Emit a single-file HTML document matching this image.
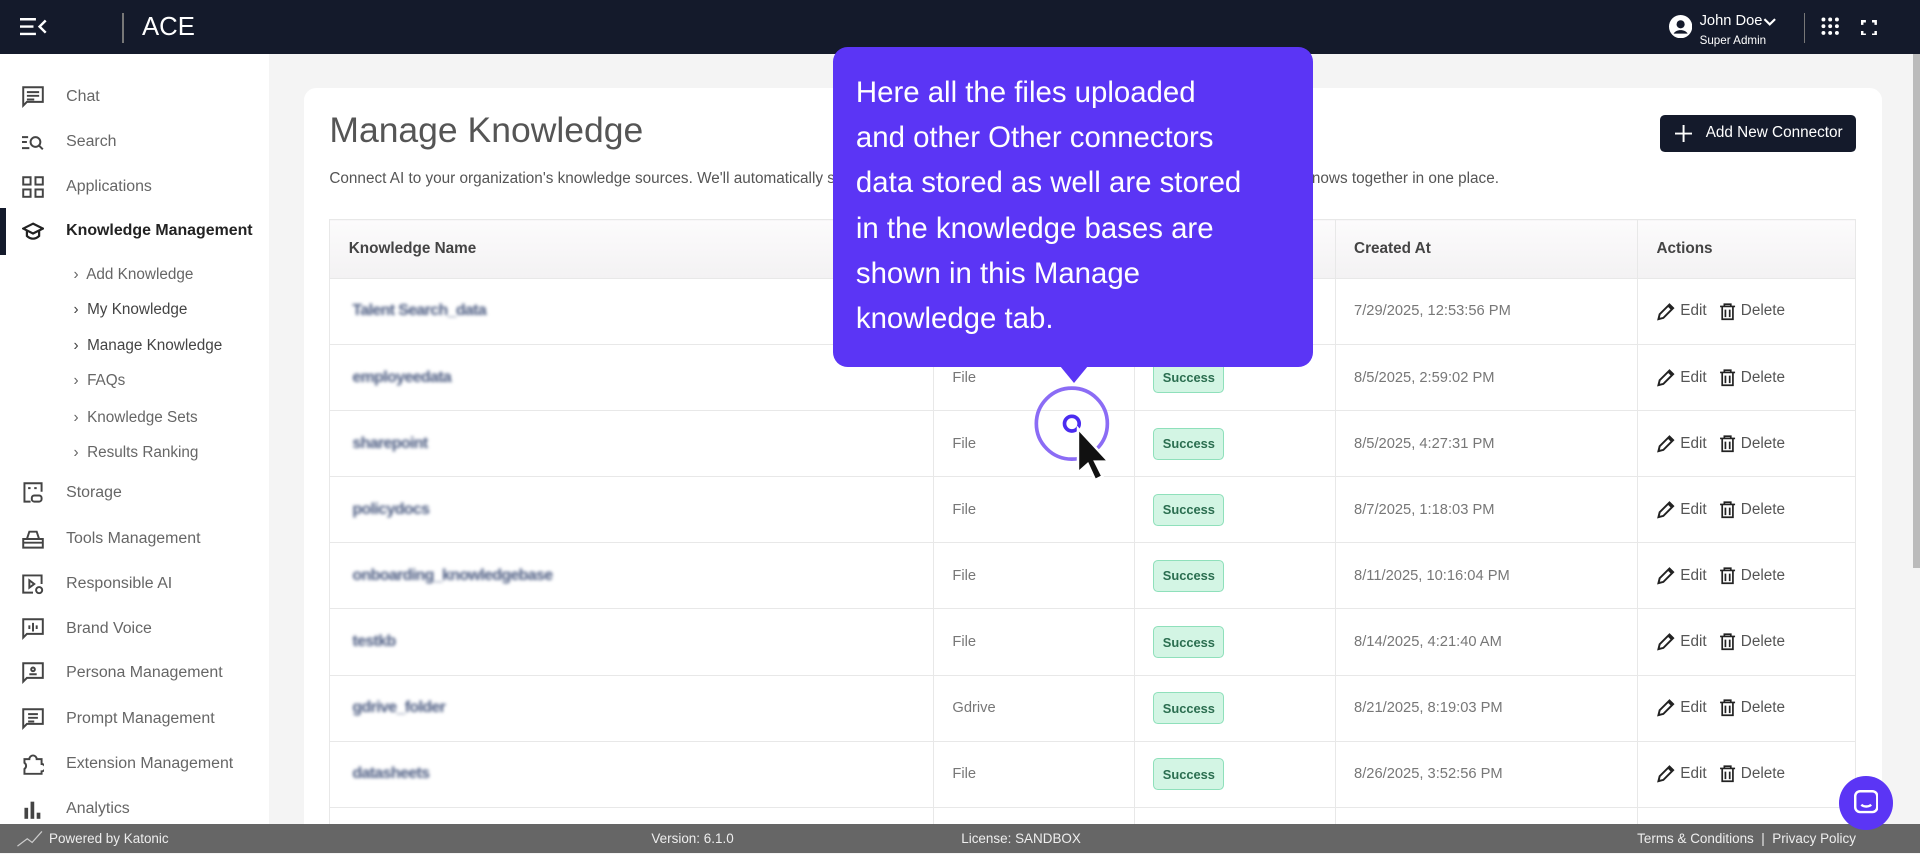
<!DOCTYPE html>
<html><head><meta charset="utf-8"><style>
*{box-sizing:border-box;margin:0;padding:0}
html,body{width:1920px;height:854px;overflow:hidden}
body{font-family:"Liberation Sans",sans-serif;background:#f5f5f5}
#r{zoom:1.2244898;width:1568px;height:697px;position:relative;overflow:hidden;background:#f4f4f4}
.a{position:absolute}
.hdr{left:0;top:0;width:1568px;height:44px;background:#141a2b;color:#fff}
.side{left:0;top:44px;width:220px;height:629px;background:#fff}
.ni{position:absolute;left:0;width:220px;height:30px;font-size:13px;color:#666;display:flex;align-items:center}
.ni svg{position:absolute;left:18px}
.ni span{position:absolute;left:54px}
.sub{position:absolute;left:60px;font-size:12.5px;color:#666}
.card{left:248px;top:72px;width:1289px;height:640px;background:#fff;border-radius:10px}
table{border-collapse:collapse;position:absolute;left:269px;top:179px;width:1247px;font-size:12px;color:#777}
td,th{border:1px solid #e8e8e8;height:54px;padding-left:15px;text-align:left}
th{height:48px;background:linear-gradient(#fcfbfc,#f3f2f3);color:#444;font-size:12.5px}
td:first-child{padding-left:18px}
.bl{filter:blur(1.3px);color:#4a5a80;font-size:13px;font-weight:bold;letter-spacing:-0.5px}
.badge{display:inline-block;background:#d3f5e4;border:1.5px solid #8fe0bb;color:#2b6e50;font-weight:bold;font-size:10.5px;padding:6px 7px;border-radius:4px}
.act{color:#555;font-size:12.5px;display:flex;align-items:center}
.foot{left:0;top:673px;width:1568px;height:24px;background:#666;color:#eee;font-size:11px}
.foot span{position:absolute;top:6px}
.tip{left:680px;top:38px;width:392px;height:262px;background:#5b35f5;border-radius:12px;color:#fff;font-size:24px;line-height:37px;padding:19px 10px 0 19px;white-space:nowrap}
</style></head><body><div id="r">
<div class="a hdr">
<svg class="a" style="left:16px;top:15px" width="22" height="14" viewBox="0 0 22 14" fill="none" stroke="#fff" stroke-width="2"><path d="M0 1h13M0 7h11M0 13h13M21 2l-5 5 5 5"/></svg>
<div class="a" style="left:100px;top:11px;width:1px;height:24px;background:#777"></div>
<div class="a" style="left:116px;top:11px;font-size:21px">ACE</div>
<svg class="a" style="left:1363px;top:12px" width="19" height="19" viewBox="0 0 20 20"><circle cx="10" cy="10" r="10" fill="#fff"/><circle cx="10" cy="8" r="3.5" fill="#141a2b"/><path d="M4 16c2-4 10-4 12 0" fill="#141a2b"/></svg>
<div class="a" style="left:1388px;top:11px;font-size:12px">John Doe</div>
<svg class="a" style="left:1440px;top:15px" width="11" height="7" viewBox="0 0 12 8" fill="none" stroke="#fff" stroke-width="2"><path d="M1 1l5 5 5-5"/></svg>
<div class="a" style="left:1388px;top:28px;font-size:9.5px">Super Admin</div>
<div class="a" style="left:1473px;top:11px;width:1px;height:24px;background:#777"></div>
<svg class="a" style="left:1487px;top:14px" width="15" height="15" viewBox="0 0 15 15" fill="#fff"><circle cx="2" cy="2" r="1.6"/><circle cx="7.5" cy="2" r="1.6"/><circle cx="13" cy="2" r="1.6"/><circle cx="2" cy="7.5" r="1.6"/><circle cx="7.5" cy="7.5" r="1.6"/><circle cx="13" cy="7.5" r="1.6"/><circle cx="2" cy="13" r="1.6"/><circle cx="7.5" cy="13" r="1.6"/><circle cx="13" cy="13" r="1.6"/></svg>
<svg class="a" style="left:1520px;top:16px" width="13" height="13" viewBox="0 0 13 13" fill="none" stroke="#fff" stroke-width="2"><path d="M1 4V1h3M9 1h3v3M12 9v3H9M4 12H1V9"/></svg>
</div>
<div class="a" style="left:1562px;top:44px;width:6px;height:420px;background:#bbb"></div>
<div class="a side">
<div class="ni" style="top:20px"><svg width="18" height="18" viewBox="0 0 18 18" fill="none" stroke="#444" stroke-width="1.6"><path d="M1 1h16v12H4l-3 3z M4 5h10M4 8h10M4 11h6"/></svg><span>Chat</span></div>
<div class="ni" style="top:57px"><svg width="18" height="18" viewBox="0 0 18 18" fill="none" stroke="#444" stroke-width="1.6"><path d="M0 5h5M0 9h4M0 14h6"/><circle cx="11" cy="9" r="4"/><path d="M14 12l3 3"/></svg><span>Search</span></div>
<div class="ni" style="top:94px"><svg width="18" height="18" viewBox="0 0 18 18" fill="none" stroke="#444" stroke-width="1.6"><rect x="1" y="1" width="6" height="6"/><rect x="11" y="1" width="6" height="6"/><rect x="1" y="11" width="6" height="6"/><rect x="11" y="11" width="6" height="6"/></svg><span>Applications</span></div>
<div class="a" style="left:0;top:126px;width:5px;height:38px;background:#141a2b"></div>
<div class="ni" style="top:130px"><svg width="18" height="18" viewBox="0 0 18 18" fill="none" stroke="#222" stroke-width="1.8"><path d="M9 3l8 4-8 4-8-4z M4 9v4c3 3 7 3 10 0V9"/></svg><span style="color:#222;font-weight:bold">Knowledge Management</span></div>
<div class="sub" style="top:173px">›&nbsp; Add Knowledge</div>
<div class="sub" style="top:202px;color:#444">›&nbsp; My Knowledge</div>
<div class="sub" style="top:231px;color:#444">›&nbsp; Manage Knowledge</div>
<div class="sub" style="top:260px">›&nbsp; FAQs</div>
<div class="sub" style="top:290px">›&nbsp; Knowledge Sets</div>
<div class="sub" style="top:319px">›&nbsp; Results Ranking</div>
<div class="ni" style="top:344px"><svg width="18" height="18" viewBox="0 0 18 18" fill="none" stroke="#444" stroke-width="1.6"><path d="M7 16H2V1h14v7M5 5h2M10 5h2"/><rect x="8" y="11" width="8" height="5" rx="2"/></svg><span>Storage</span></div>
<div class="ni" style="top:381px"><svg width="18" height="18" viewBox="0 0 18 18" fill="none" stroke="#444" stroke-width="1.6"><path d="M1 9h16v7H1zM4 9l2-6h6l2 6M1 12h16"/></svg><span>Tools Management</span></div>
<div class="ni" style="top:418px"><svg width="18" height="18" viewBox="0 0 18 18" fill="none" stroke="#444" stroke-width="1.6"><path d="M9 16H1V2h15v7M6 6l4 3-4 3z"/><circle cx="14" cy="14" r="2.5"/></svg><span>Responsible AI</span></div>
<div class="ni" style="top:455px"><svg width="18" height="18" viewBox="0 0 18 18" fill="none" stroke="#444" stroke-width="1.6"><path d="M1 1h16v12H4l-3 3zM6 6v3M9 4v7M12 6v3"/></svg><span>Brand Voice</span></div>
<div class="ni" style="top:491px"><svg width="18" height="18" viewBox="0 0 18 18" fill="none" stroke="#444" stroke-width="1.6"><path d="M1 1h16v12H4l-3 3zM6 10h6"/><circle cx="9" cy="6" r="1.5"/></svg><span>Persona Management</span></div>
<div class="ni" style="top:528px"><svg width="18" height="18" viewBox="0 0 18 18" fill="none" stroke="#444" stroke-width="1.6"><path d="M1 1h16v12H4l-3 3zM5 5h8M5 8h8M5 11h5"/></svg><span>Prompt Management</span></div>
<div class="ni" style="top:565px"><svg width="18" height="18" viewBox="0 0 18 18" fill="none" stroke="#444" stroke-width="1.6"><path d="M2 5h4a3 3 0 016 0h4v4a3 3 0 010 6v2H2v-4a3 3 0 000-5z"/></svg><span>Extension Management</span></div>
<div class="ni" style="top:602px"><svg width="18" height="18" viewBox="0 0 18 18" fill="#444"><rect x="2" y="8" width="3" height="9"/><rect x="7" y="3" width="3" height="14"/><rect x="12" y="12" width="3" height="5"/></svg><span>Analytics</span></div>
</div>
<div class="a card"></div>
<div class="a" style="left:269px;top:90px;font-size:29px;color:#555">Manage Knowledge</div>
<div class="a" style="left:1356px;top:94px;width:160px;height:30px;background:#141a2b;border-radius:4px;color:#fff;font-size:12.5px;line-height:30px;padding-left:37px">Add New Connector</div>
<svg class="a" style="left:1368px;top:102px" width="14" height="14" viewBox="0 0 14 14" stroke="#fff" stroke-width="1.6"><path d="M7 0v14M0 7h14"/></svg>
<div class="a" style="left:269px;top:139px;font-size:12.5px;color:#555">Connect AI to your organization's knowledge sources. We'll automatically sync your data so you can search and work with everything your team knows together in one place.</div>
<svg width="0" height="0" style="position:absolute"><defs>
<symbol id="pe" viewBox="0 0 16 16"><path d="M2 14l1-4 8-8 3 3-8 8z M10 3l3 3" fill="none" stroke="#222" stroke-width="1.6"/></symbol>
<symbol id="tr" viewBox="0 0 16 16"><path d="M1 3h14M5 3V1h6v2M3 3v12h10V3M6 6v7M10 6v7" fill="none" stroke="#222" stroke-width="1.6"/></symbol>
</defs></svg>
<table>
<tr><th style="width:493px">Knowledge Name</th><th style="width:164px">Type</th><th style="width:164px">Status</th><th style="width:247px">Created At</th><th>Actions</th></tr>
<tr><td><span class="bl">Talent Search_data</span></td><td>File</td><td><span class="badge">Success</span></td><td>7/29/2025, 12:53:56 PM</td><td><div class="act"><svg width="16" height="16"><use href="#pe"/></svg>&nbsp;Edit &nbsp;&nbsp;<svg width="14" height="16"><use href="#tr"/></svg>&nbsp;Delete</div></td></tr>
<tr><td><span class="bl">employeedata</span></td><td>File</td><td><span class="badge">Success</span></td><td>8/5/2025, 2:59:02 PM</td><td><div class="act"><svg width="16" height="16"><use href="#pe"/></svg>&nbsp;Edit &nbsp;&nbsp;<svg width="14" height="16"><use href="#tr"/></svg>&nbsp;Delete</div></td></tr>
<tr><td><span class="bl">sharepoint</span></td><td>File</td><td><span class="badge">Success</span></td><td>8/5/2025, 4:27:31 PM</td><td><div class="act"><svg width="16" height="16"><use href="#pe"/></svg>&nbsp;Edit &nbsp;&nbsp;<svg width="14" height="16"><use href="#tr"/></svg>&nbsp;Delete</div></td></tr>
<tr><td><span class="bl">policydocs</span></td><td>File</td><td><span class="badge">Success</span></td><td>8/7/2025, 1:18:03 PM</td><td><div class="act"><svg width="16" height="16"><use href="#pe"/></svg>&nbsp;Edit &nbsp;&nbsp;<svg width="14" height="16"><use href="#tr"/></svg>&nbsp;Delete</div></td></tr>
<tr><td><span class="bl">onboarding_knowledgebase</span></td><td>File</td><td><span class="badge">Success</span></td><td>8/11/2025, 10:16:04 PM</td><td><div class="act"><svg width="16" height="16"><use href="#pe"/></svg>&nbsp;Edit &nbsp;&nbsp;<svg width="14" height="16"><use href="#tr"/></svg>&nbsp;Delete</div></td></tr>
<tr><td><span class="bl">testkb</span></td><td>File</td><td><span class="badge">Success</span></td><td>8/14/2025, 4:21:40 AM</td><td><div class="act"><svg width="16" height="16"><use href="#pe"/></svg>&nbsp;Edit &nbsp;&nbsp;<svg width="14" height="16"><use href="#tr"/></svg>&nbsp;Delete</div></td></tr>
<tr><td><span class="bl">gdrive_folder</span></td><td>Gdrive</td><td><span class="badge">Success</span></td><td>8/21/2025, 8:19:03 PM</td><td><div class="act"><svg width="16" height="16"><use href="#pe"/></svg>&nbsp;Edit &nbsp;&nbsp;<svg width="14" height="16"><use href="#tr"/></svg>&nbsp;Delete</div></td></tr>
<tr><td><span class="bl">datasheets</span></td><td>File</td><td><span class="badge">Success</span></td><td>8/26/2025, 3:52:56 PM</td><td><div class="act"><svg width="16" height="16"><use href="#pe"/></svg>&nbsp;Edit &nbsp;&nbsp;<svg width="14" height="16"><use href="#tr"/></svg>&nbsp;Delete</div></td></tr>
<tr><td></td><td></td><td></td><td></td><td></td></tr>
</table>
<div class="a tip">Here all the files uploaded<br>and other Other connectors<br>data stored as well are stored<br>in the knowledge bases are<br>shown in this Manage<br>knowledge tab.</div>
<div class="a" style="left:866px;top:299px;width:0;height:0;border-left:12px solid transparent;border-right:12px solid transparent;border-top:14px solid #5b35f5"></div>
<svg class="a" style="left:840px;top:312px" width="80" height="90" viewBox="0 0 80 90"><circle cx="35" cy="34" r="29" fill="none" stroke="#8b6cf5" stroke-width="3"/><circle cx="35" cy="34" r="6" fill="none" stroke="#4b2cf0" stroke-width="3"/><path d="M40 38v36l8-7 6 13 6-3-6-12h11z" fill="#111" stroke="#fff" stroke-width="2"/></svg>
<div class="a foot"><span style="left:40px">Powered by Katonic</span><span style="left:532px">Version: 6.1.0</span><span style="left:785px">License: SANDBOX</span><span style="left:1337px">Terms &amp; Conditions &nbsp;|&nbsp; Privacy Policy</span></div>
<svg class="a" style="left:12px;top:677px" width="24" height="16" viewBox="0 0 24 16" fill="none" stroke="#ccc"><path d="M2 14l8-6 4 3 8-9"/></svg>
<div class="a" style="left:1502px;top:634px;width:44px;height:44px;border-radius:50%;background:#5b35f5"></div>
<svg class="a" style="left:1514px;top:645px" width="20" height="22" viewBox="0 0 20 22" fill="none" stroke="#fff" stroke-width="2"><rect x="1" y="1" width="18" height="17" rx="4"/><path d="M6 12c2 2 6 2 8 0"/></svg>
</div></body></html>
